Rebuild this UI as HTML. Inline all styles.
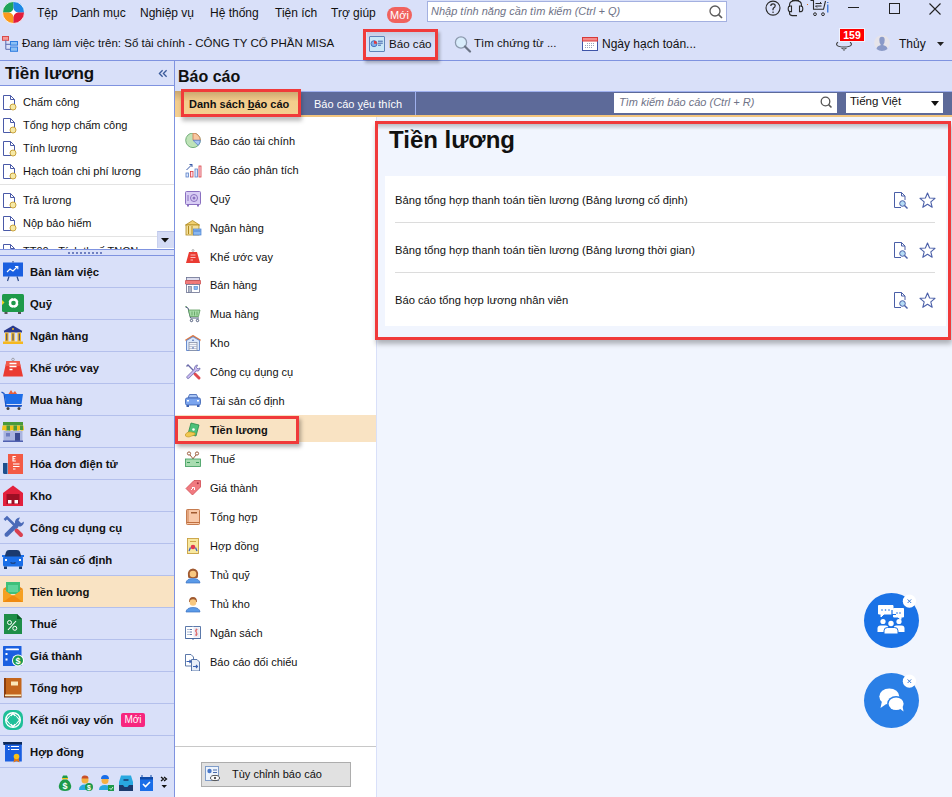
<!DOCTYPE html>
<html><head><meta charset="utf-8">
<style>
*{box-sizing:border-box;margin:0;padding:0}
html,body{width:952px;height:797px;overflow:hidden;background:#d9e0f9;font-family:"Liberation Sans",sans-serif;color:#111;position:relative}
.a{position:absolute;white-space:nowrap}
.t{position:absolute;white-space:nowrap;line-height:1}
</style></head><body>

<!-- ===== MENU BAR ===== -->
<div id="menubar">
  <svg class="a" style="left:1.6px;top:0.5px" width="23" height="23" viewBox="0 0 23 23">
    <path d="M11.5 11.5 L11.5 0.5 A11 11 0 0 0 0.5 11.5 Z" fill="#1fa35a"/>
    <path d="M11.5 11.5 L22.5 11.5 A11 11 0 0 0 11.5 0.5 Z" fill="#1e88e5"/>
    <path d="M11.5 11.5 L0.5 11.5 A11 11 0 0 0 11.5 22.5 Z" fill="#fb9a1c"/>
    <path d="M11.5 11.5 L11.5 22.5 A11 11 0 0 0 22.5 11.5 Z" fill="#e21d3c"/>
    <path d="M11.5 7 Q12.1 10.9 16 11.5 Q12.1 12.1 11.5 16 Q10.9 12.1 7 11.5 Q10.9 10.9 11.5 7Z" fill="#fff"/>
    <circle cx="11.5" cy="11.5" r="11" fill="none" stroke="#fff" stroke-width="0.8"/>
  </svg>
  <div class="t" style="left:37px;top:7px;font-size:12px">Tệp</div>
  <div class="t" style="left:71px;top:7px;font-size:12px">Danh mục</div>
  <div class="t" style="left:140px;top:7px;font-size:12px">Nghiệp vụ</div>
  <div class="t" style="left:210px;top:7px;font-size:12px">Hệ thống</div>
  <div class="t" style="left:275px;top:7px;font-size:12px">Tiện ích</div>
  <div class="t" style="left:331px;top:7px;font-size:12px">Trợ giúp</div>
  <div class="a" style="left:387px;top:7px;width:25px;height:16px;border-radius:8px;background:#f0625e;color:#fff;font-size:11px;line-height:16px;text-align:center">Mới</div>
  <div class="a" style="left:427px;top:1px;width:300px;height:21px;background:#fff;border:1px solid #a3b0e0"></div>
  <div class="t" style="left:431px;top:6px;font-size:11px;font-style:italic;color:#6f7387">Nhập tính năng cần tìm kiếm (Ctrl + Q)</div>
  <svg class="a" style="left:708px;top:4px" width="16" height="16" viewBox="0 0 16 16"><circle cx="7" cy="7" r="5" fill="none" stroke="#5a5a5a" stroke-width="1.3"/><path d="M10.6 10.6 L14 14" stroke="#5a5a5a" stroke-width="1.6"/></svg>
  <!-- right icons -->
  <svg class="a" style="left:764px;top:0px" width="18" height="17" viewBox="0 0 18 17"><circle cx="9" cy="8.1" r="7" fill="none" stroke="#2a2a2a" stroke-width="1.1"/><path d="M6.8 6 Q6.8 3.8 9 3.8 Q11.2 3.8 11.2 5.8 Q11.2 7.2 9.6 7.9 Q9 8.3 9 9.6 V10.2" fill="none" stroke="#2a2a2a" stroke-width="1.2"/><rect x="8.4" y="11.6" width="1.3" height="1.3" fill="#2a2a2a"/></svg>
  <svg class="a" style="left:787px;top:0px" width="18" height="17" viewBox="0 0 18 17"><path d="M2.5 7 V5 Q2.5 0.6 8.5 0.6 Q14.5 0.6 14.5 5 V7" fill="none" stroke="#2a2a2a" stroke-width="1.1"/><path d="M2.5 11 V13 Q2.5 15.6 5.5 15.6 H10" fill="none" stroke="#2a2a2a" stroke-width="1.1"/><path d="M4.5 6 H3 Q1.2 6 1.2 8.8 Q1.2 11.6 3 11.6 H4.5Z M12.5 6 H14 Q15.8 6 15.8 8.8 Q15.8 11.6 14 11.6 H12.5Z" fill="none" stroke="#2a2a2a" stroke-width="1.1"/><rect x="5" y="0" width="7" height="1" fill="#2a2a2a"/></svg>
  <div class="a" style="left:807px;top:4px;width:1px;height:1px;background:#d06a20"></div>
  <svg class="a" style="left:810px;top:0px" width="20" height="17" viewBox="0 0 20 17"><path d="M0.5 0.5 H3.5 V9.3 H13.5 L15.5 1" fill="none" stroke="#2a2a2a" stroke-width="1.1"/><path d="M5.5 3.5 H11.5 M10 2 L11.5 3.5 M5.5 6 H11.5 M7 7.5 L5.5 6" stroke="#2a2a2a" stroke-width="1" fill="none"/><circle cx="5" cy="14.2" r="1.4" fill="none" stroke="#2a2a2a" stroke-width="1"/><circle cx="13" cy="14.2" r="1.4" fill="none" stroke="#2a2a2a" stroke-width="1"/><path d="M17.8 2 V3 M17.8 4.5 V12.5" stroke="#1a5fd0" stroke-width="1.1"/></svg>
  <div class="a" style="left:848px;top:7px;width:11px;height:1px;background:#222"></div>
  <div class="a" style="left:889px;top:3px;width:11px;height:11px;border:1px solid #222"></div>
  <svg class="a" style="left:929px;top:3px" width="12" height="12" viewBox="0 0 12 12"><path d="M0.5 0.5 L11.5 11.5 M11.5 0.5 L0.5 11.5" stroke="#222" stroke-width="1.1"/></svg>
</div>

<!-- ===== TOOLBAR ===== -->
<div id="toolbar">
  <svg class="a" style="left:2px;top:36px" width="17" height="17" viewBox="0 0 17 17">
    <rect x="0.5" y="0.5" width="6" height="3.8" fill="#f59a9a" stroke="#d94b4b" stroke-width="1"/>
    <path d="M3.8 4.3 V13.3 H8.5 M3.8 8.3 H8.5" fill="none" stroke="#5a6ab0" stroke-width="1"/>
    <rect x="8.5" y="5.5" width="7" height="3.6" fill="#8cc0f4" stroke="#2f7de0" stroke-width="1"/>
    <rect x="8.5" y="11" width="7" height="4.3" fill="#8cc0f4" stroke="#2f7de0" stroke-width="1"/>
  </svg>
  <div class="t" style="left:22px;top:38px;font-size:11.5px">Đang làm việc trên: Sổ tài chính - CÔNG TY CỔ PHẦN MISA</div>
  <!-- Bao cao button w/ red box -->
  <div class="a" style="left:363px;top:29px;width:75px;height:31px;border:3px solid #f03a3a;z-index:5;box-shadow:2px 3px 3px rgba(0,0,0,0.25)"></div>
  <div class="a" style="left:367px;top:32px;width:68px;height:25px;background:linear-gradient(#c4cbe0,#d3d9f0 25%,#d9e0f9 60%)"></div>
  <svg class="a" style="left:369px;top:36px" width="16" height="16" viewBox="0 0 16 16"><rect x="0.5" y="0.5" width="15" height="15" rx="0.5" fill="#c9e7f7" stroke="#5f84b8" stroke-width="1"/><circle cx="5" cy="7.7" r="3" fill="#7fb0ea" stroke="#3f6cb8" stroke-width="0.9"/><path d="M5 7.7 V4.7 A3 3 0 0 1 8 7.7Z" fill="#e23a3a"/><path d="M9 5.2 H13.8 M9 7.2 H13.8 M9 9.2 H12" stroke="#3f5fa8" stroke-width="1"/></svg>
  <div class="t" style="left:389px;top:38px;font-size:11.6px">Báo cáo</div>
  <svg class="a" style="left:454px;top:36px" width="18" height="17" viewBox="0 0 18 17"><circle cx="7" cy="6.5" r="5.6" fill="#d8ecfb" stroke="#8c9aae" stroke-width="1.3"/><path d="M11 10.5 L16 15.5" stroke="#6b7486" stroke-width="2.2" stroke-linecap="round"/></svg>
  <div class="t" style="left:474px;top:38px;font-size:11.5px">Tìm chứng từ ...</div>
  <svg class="a" style="left:582px;top:37px" width="16" height="14" viewBox="0 0 16 14"><rect x="0.5" y="0.5" width="15" height="13" fill="#fff" stroke="#3f55a8" stroke-width="1"/><rect x="0.5" y="0.5" width="15" height="3.5" fill="#f58a8a" stroke="#d63a3a" stroke-width="1"/><g fill="#9aa4b8"><rect x="5" y="6" width="1" height="1"/><rect x="7" y="6" width="1" height="1"/><rect x="9" y="6" width="1" height="1"/><rect x="11" y="6" width="1" height="1"/><rect x="3" y="8" width="1" height="1"/><rect x="5" y="8" width="1" height="1"/><rect x="7" y="8" width="1" height="1"/><rect x="9" y="8" width="1" height="1"/><rect x="11" y="8" width="1" height="1"/><rect x="3" y="10" width="1" height="1"/><rect x="5" y="10" width="1" height="1"/><rect x="7" y="10" width="1" height="1"/><rect x="9" y="10" width="1" height="1"/></g></svg>
  <div class="t" style="left:602px;top:38px;font-size:12px">Ngày hạch toán...</div>
  <!-- notification -->
  <svg class="a" style="left:835px;top:40px" width="18" height="12" viewBox="0 0 18 12"><path d="M3 2.2 Q1.3 3.2 1.6 4.6 Q2.5 7 9 7 Q15.5 7 16.4 4.6 Q16.7 3.2 15 2.2" fill="none" stroke="#3a3a3a" stroke-width="1.1"/><path d="M6.5 8 Q9 10 11.5 8" fill="none" stroke="#555" stroke-width="1.1"/><path d="M8 9.8 L9 11 L10 9.8" fill="#444"/></svg>
  <div class="a" style="left:840px;top:29px;width:24px;height:12px;background:#f00;color:#fff;font-size:10.5px;font-weight:bold;line-height:12px;text-align:center;box-shadow:0 0 0 1px rgba(255,255,255,0.6)">159</div>
  <svg class="a" style="left:874px;top:35px" width="16" height="16" viewBox="0 0 16 16"><circle cx="8" cy="8" r="7.8" fill="#e6e4ea"/><path d="M8 1.8 Q5.3 1.8 5.3 5 Q5.3 8 6.6 9.3 V10.3 Q3 11 2.5 14 Q5 16 8 16 Q11 16 13.5 14 Q13 11 9.4 10.3 V9.3 Q10.7 8 10.7 5 Q10.7 1.8 8 1.8Z" fill="#8a9ac8"/></svg>
  <div class="t" style="left:899px;top:38px;font-size:12px">Thủy</div>
  <svg class="a" style="left:937px;top:42px" width="7" height="4" viewBox="0 0 7 4"><path d="M0 0 H7 L3.5 4Z" fill="#222"/></svg>
</div>
<div class="a" style="left:0;top:60px;width:952px;height:1px;background:#7f93e0"></div>

<!-- ===== LEFT SIDEBAR ===== -->
<div id="sidebar">
  <div class="t" style="left:5px;top:65px;font-size:17px;font-weight:bold">Tiền lương</div>
  <svg class="a" style="left:158px;top:69px" width="10" height="9" viewBox="0 0 10 9"><path d="M4.6 1.2 L1.4 4.5 L4.6 7.8 M8.6 1.2 L5.4 4.5 L8.6 7.8" fill="none" stroke="#3a5a9a" stroke-width="1.3"/></svg>
  <div class="a" style="left:0;top:85px;width:174px;height:1px;background:#7f93e0"></div>
  <div class="a" style="left:0;top:86px;width:174px;height:163px;background:#fff"></div>
<svg class="a" style="left:2px;top:95px" width="16" height="16" viewBox="0 0 16 16"><path d="M1.5 0.5 H8.5 L12.5 4.5 V10 M10 14.5 H1.5 V0.5 M8.5 0.5 V4.5 H12.5" fill="none" stroke="#4a5aa8" stroke-width="1"/><circle cx="11" cy="12" r="3" fill="#f6e9a6" stroke="#c9a23c" stroke-width="1"/></svg>
<div class="t" style="left:23px;top:97px;font-size:11px">Chấm công</div>
<svg class="a" style="left:2px;top:118px" width="16" height="16" viewBox="0 0 16 16"><path d="M1.5 0.5 H8.5 L12.5 4.5 V10 M10 14.5 H1.5 V0.5 M8.5 0.5 V4.5 H12.5" fill="none" stroke="#4a5aa8" stroke-width="1"/><circle cx="11" cy="12" r="3" fill="#f6e9a6" stroke="#c9a23c" stroke-width="1"/></svg>
<div class="t" style="left:23px;top:120px;font-size:11px">Tổng hợp chấm công</div>
<svg class="a" style="left:2px;top:141px" width="16" height="16" viewBox="0 0 16 16"><path d="M1.5 0.5 H8.5 L12.5 4.5 V10 M10 14.5 H1.5 V0.5 M8.5 0.5 V4.5 H12.5" fill="none" stroke="#4a5aa8" stroke-width="1"/><circle cx="11" cy="12" r="3" fill="#f6e9a6" stroke="#c9a23c" stroke-width="1"/></svg>
<div class="t" style="left:23px;top:143px;font-size:11px">Tính lương</div>
<svg class="a" style="left:2px;top:164px" width="16" height="16" viewBox="0 0 16 16"><path d="M1.5 0.5 H8.5 L12.5 4.5 V10 M10 14.5 H1.5 V0.5 M8.5 0.5 V4.5 H12.5" fill="none" stroke="#4a5aa8" stroke-width="1"/><circle cx="11" cy="12" r="3" fill="#f6e9a6" stroke="#c9a23c" stroke-width="1"/></svg>
<div class="t" style="left:23px;top:166px;font-size:11px">Hạch toán chi phí lương</div>
<svg class="a" style="left:2px;top:193px" width="16" height="16" viewBox="0 0 16 16"><path d="M1.5 0.5 H8.5 L12.5 4.5 V10 M10 14.5 H1.5 V0.5 M8.5 0.5 V4.5 H12.5" fill="none" stroke="#4a5aa8" stroke-width="1"/><circle cx="11" cy="12" r="3" fill="#f6e9a6" stroke="#c9a23c" stroke-width="1"/></svg>
<div class="t" style="left:23px;top:195px;font-size:11px">Trả lương</div>
<svg class="a" style="left:2px;top:216px" width="16" height="16" viewBox="0 0 16 16"><path d="M1.5 0.5 H8.5 L12.5 4.5 V10 M10 14.5 H1.5 V0.5 M8.5 0.5 V4.5 H12.5" fill="none" stroke="#4a5aa8" stroke-width="1"/><circle cx="11" cy="12" r="3" fill="#f6e9a6" stroke="#c9a23c" stroke-width="1"/></svg>
<div class="t" style="left:23px;top:218px;font-size:11px">Nộp bảo hiểm</div>
<svg class="a" style="left:2px;top:244px" width="16" height="16" viewBox="0 0 16 16"><path d="M1.5 0.5 H8.5 L12.5 4.5 V10 M10 14.5 H1.5 V0.5 M8.5 0.5 V4.5 H12.5" fill="none" stroke="#4a5aa8" stroke-width="1"/><circle cx="11" cy="12" r="3" fill="#f6e9a6" stroke="#c9a23c" stroke-width="1"/></svg>
<div class="t" style="left:23px;top:246px;font-size:11px">TT00 - Tính thuế TNCN</div>
<div class="a" style="left:0;top:184px;width:174px;height:1px;background:#e3e3e3"></div>
<div class="a" style="left:0;top:236px;width:174px;height:1px;background:#e3e3e3"></div>
<div class="a" style="left:0;top:249px;width:174px;height:6px;background:#d9e0f9"></div>
<div class="a" style="left:157px;top:231px;width:17px;height:17px;background:#d4dbf5;border-top:1px solid #b9c3e8;border-left:1px solid #c9d1ef"></div>
<svg class="a" style="left:161px;top:238px" width="8" height="5" viewBox="0 0 8 5"><path d="M0 0 H8 L4 4.5Z" fill="#111"/></svg>
<div class="a" style="left:68px;top:252px;width:34px;height:2px;background:repeating-linear-gradient(90deg,#7080c0 0 2px,transparent 2px 4px)"></div>
<div class="a" style="left:0;top:249px;width:174px;height:1px;background:#7f93e0"></div>
  <div class="a" style="left:0;top:255px;width:174px;height:1px;background:#7f93e0"></div>
<div class="a" style="left:0;top:256px;width:174px;height:31px;background:#d9e0f9"></div>
<div class="a" style="left:0;top:287px;width:174px;height:1px;background:#b4c0ec"></div>
<svg class="a" style="left:0;top:256px" width="26" height="32" viewBox="0 0 26 32"><rect x="3" y="6.5" width="20" height="14" fill="#1a5fe0"/><path d="M13 5 V6.5" stroke="#2b3f7a" stroke-width="1"/><path d="M9 20.5 L7.5 25 M17 20.5 L18.5 25" stroke="#2b4a8a" stroke-width="1.2"/><path d="M7 16 L10 13 L13 15 L17 11 M15 10.5 H17.8 V13.3" fill="none" stroke="#fff" stroke-width="1.1"/></svg>
<div class="t" style="left:30px;top:267px;font-size:11.3px;font-weight:bold">Bàn làm việc</div>
<div class="a" style="left:0;top:288px;width:174px;height:31px;background:#d9e0f9"></div>
<div class="a" style="left:0;top:319px;width:174px;height:1px;background:#b4c0ec"></div>
<svg class="a" style="left:0;top:288px" width="26" height="32" viewBox="0 0 26 32"><rect x="2" y="6" width="22" height="18" rx="1.5" fill="#1e9a4a"/><rect x="4.5" y="24" width="3" height="2" fill="#555"/><rect x="18" y="24" width="3" height="2" fill="#555"/><path d="M2 12 L4.5 14.5 L2 17Z" fill="#f2d21e"/><circle cx="13.5" cy="15" r="5" fill="#fff"/><circle cx="13.5" cy="15" r="2.3" fill="#1e9a4a"/><path d="M13.5 9 V10.5 M13.5 19.5 V21 M7.5 15 H9 M18 15 H19.5" stroke="#1e9a4a" stroke-width="1.4"/></svg>
<div class="t" style="left:30px;top:299px;font-size:11.3px;font-weight:bold">Quỹ</div>
<div class="a" style="left:0;top:320px;width:174px;height:31px;background:#d9e0f9"></div>
<div class="a" style="left:0;top:351px;width:174px;height:1px;background:#b4c0ec"></div>
<svg class="a" style="left:0;top:320px" width="26" height="32" viewBox="0 0 26 32"><path d="M3.5 11 L13 5.5 L22.5 11Z" fill="#2a3a8e"/><rect x="4" y="11" width="18" height="1.5" fill="#2a3a8e"/><circle cx="13" cy="9" r="1" fill="#f5b820"/><rect x="5" y="12.5" width="3.5" height="9" fill="#f5b820"/><rect x="11.2" y="12.5" width="3.5" height="9" fill="#f5b820"/><rect x="17.5" y="12.5" width="3.5" height="9" fill="#f5b820"/><rect x="6.3" y="13.5" width="1" height="7" fill="#2a3a8e"/><rect x="12.5" y="13.5" width="1" height="7" fill="#2a3a8e"/><rect x="18.8" y="13.5" width="1" height="7" fill="#2a3a8e"/><rect x="3" y="21.5" width="20" height="2.5" fill="#f5b820"/></svg>
<div class="t" style="left:30px;top:331px;font-size:11.3px;font-weight:bold">Ngân hàng</div>
<div class="a" style="left:0;top:352px;width:174px;height:31px;background:#d9e0f9"></div>
<div class="a" style="left:0;top:383px;width:174px;height:1px;background:#b4c0ec"></div>
<svg class="a" style="left:0;top:352px" width="26" height="32" viewBox="0 0 26 32"><circle cx="13" cy="7.5" r="1.3" fill="none" stroke="#888" stroke-width="0.7"/><path d="M6.5 9 H19.5 L23 24.5 H3Z" fill="#ea3b32"/><path d="M6.5 9 H19.5 L20.5 14 H5.5Z" fill="#f25a4a"/><path d="M9.5 11.5 H16.5 M9.5 14.5 H16.5 M9.5 17.5 H12.5" stroke="#fff" stroke-width="1.3"/></svg>
<div class="t" style="left:30px;top:363px;font-size:11.3px;font-weight:bold">Khế ước vay</div>
<div class="a" style="left:0;top:384px;width:174px;height:31px;background:#d9e0f9"></div>
<div class="a" style="left:0;top:415px;width:174px;height:1px;background:#b4c0ec"></div>
<svg class="a" style="left:0;top:384px" width="26" height="32" viewBox="0 0 26 32"><path d="M1.5 8 L4 9.5 L6 22 H21" fill="none" stroke="#1a55c8" stroke-width="1.3"/><path d="M8.5 10 L11 6 L13 9 L15 7 L17 10Z" fill="#e8603a"/><path d="M4.5 10 H23 L21.5 20 H6Z" fill="#1e6ee8"/><rect x="5" y="21" width="17" height="1.5" fill="#1a55c8"/><circle cx="8" cy="24.5" r="1.5" fill="#444"/><circle cx="19" cy="24.5" r="1.5" fill="#444"/></svg>
<div class="t" style="left:30px;top:395px;font-size:11.3px;font-weight:bold">Mua hàng</div>
<div class="a" style="left:0;top:416px;width:174px;height:31px;background:#d9e0f9"></div>
<div class="a" style="left:0;top:447px;width:174px;height:1px;background:#b4c0ec"></div>
<svg class="a" style="left:0;top:416px" width="26" height="32" viewBox="0 0 26 32"><rect x="3.5" y="15" width="19" height="11" fill="#a9b4e0"/><rect x="6" y="17" width="4" height="3.5" fill="#6c7cc0"/><rect x="15" y="17" width="5" height="9" fill="#3a4a90"/><rect x="3" y="24.5" width="20" height="1.5" fill="#5060b0"/><rect x="3" y="6" width="20" height="3.5" fill="#4a9a3a"/><path d="M2.5 9.5 H23.5 L24 14 Q22 15.5 20 14 Q18 15.5 16 14 Q14 15.5 12 14 Q10 15.5 8 14 Q6 15.5 4 14 Q3 14.5 2 14Z" fill="#f2c21a"/><path d="M6.5 9.5 H10 V14.5 H6.5Z M13.5 9.5 H17 V14.5 H13.5Z M20 9.5 H23 V14 H20Z" fill="#4a9a3a"/></svg>
<div class="t" style="left:30px;top:427px;font-size:11.3px;font-weight:bold">Bán hàng</div>
<div class="a" style="left:0;top:448px;width:174px;height:31px;background:#d9e0f9"></div>
<div class="a" style="left:0;top:479px;width:174px;height:1px;background:#b4c0ec"></div>
<svg class="a" style="left:0;top:448px" width="26" height="32" viewBox="0 0 26 32"><rect x="8" y="6" width="15" height="20" fill="#f35a45"/><path d="M3 15 H7.5 V26 H4.5 Q3 26 3 24.5Z" fill="#1d4f8e"/><path d="M15.8 8.5 H13 V13 H15.8 M13 10.75 H15.3 M13 16 H19.5 M13 18.5 H19.5 M13 21 H15.5" stroke="#fff" stroke-width="1.1" fill="none"/></svg>
<div class="t" style="left:30px;top:459px;font-size:11.3px;font-weight:bold">Hóa đơn điện tử</div>
<div class="a" style="left:0;top:480px;width:174px;height:31px;background:#d9e0f9"></div>
<div class="a" style="left:0;top:511px;width:174px;height:1px;background:#b4c0ec"></div>
<svg class="a" style="left:0;top:480px" width="26" height="32" viewBox="0 0 26 32"><path d="M3 13 L13 5.5 L23 13 V26 H3Z" fill="#e3203c"/><rect x="6.5" y="14" width="13" height="12" fill="#9d0f24"/><rect x="8" y="20" width="3.5" height="3.5" fill="#fff"/><rect x="14.5" y="20" width="3.5" height="3.5" fill="#fff"/><rect x="5" y="24" width="16" height="2" fill="#e3203c"/></svg>
<div class="t" style="left:30px;top:491px;font-size:11.3px;font-weight:bold">Kho</div>
<div class="a" style="left:0;top:512px;width:174px;height:31px;background:#d9e0f9"></div>
<div class="a" style="left:0;top:543px;width:174px;height:1px;background:#b4c0ec"></div>
<svg class="a" style="left:0;top:512px" width="26" height="32" viewBox="0 0 26 32"><path d="M4.5 8 L7 5.5 L17.5 16" stroke="#4a6ab8" stroke-width="2.6" fill="none"/><path d="M16.5 18.5 L21 23" stroke="#d9404f" stroke-width="4" stroke-linecap="round"/><path d="M20 5.5 A5 5 0 0 0 15 11.5 L4.8 21.5 A2.2 2.2 0 0 0 7.8 24.5 L18 14.5 A5 5 0 0 0 24 9.5 L21.2 11.2 L18.5 8.6 Z" fill="#4a6ab8"/></svg>
<div class="t" style="left:30px;top:523px;font-size:11.3px;font-weight:bold">Công cụ dụng cụ</div>
<div class="a" style="left:0;top:544px;width:174px;height:31px;background:#d9e0f9"></div>
<div class="a" style="left:0;top:575px;width:174px;height:1px;background:#b4c0ec"></div>
<svg class="a" style="left:0;top:544px" width="26" height="32" viewBox="0 0 26 32"><path d="M6 8 Q6.5 6 9 6 H17 Q19.5 6 20 8 L21.5 13 H4.5Z" fill="#1b3a6e"/><rect x="2" y="11" width="3" height="2" fill="#1a6ee8"/><rect x="21" y="11" width="3" height="2" fill="#1a6ee8"/><rect x="3" y="12.5" width="20" height="10" rx="1.5" fill="#1a6ee8"/><rect x="5" y="15" width="2" height="2" fill="#fff"/><rect x="19" y="15" width="2" height="2" fill="#fff"/><path d="M10.5 18.5 Q13 20 15.5 18.5" stroke="#1b3a6e" stroke-width="1.1" fill="none"/><rect x="4" y="22.5" width="3" height="2.5" fill="#1b3a6e"/><rect x="19" y="22.5" width="3" height="2.5" fill="#1b3a6e"/></svg>
<div class="t" style="left:30px;top:555px;font-size:11.3px;font-weight:bold">Tài sản cố định</div>
<div class="a" style="left:0;top:576px;width:174px;height:31px;background:#f9e3c3"></div>
<div class="a" style="left:0;top:607px;width:174px;height:1px;background:#b4c0ec"></div>
<svg class="a" style="left:0;top:576px" width="26" height="32" viewBox="0 0 26 32"><rect x="6" y="6" width="14" height="12" fill="#3ec07a"/><rect x="8" y="9" width="10" height="7" fill="#5ed39a"/><path d="M3 13 L13 20 L23 13 V26 H3Z" fill="#f5a020"/><path d="M3 26 L13 19 L23 26Z" fill="#f08a10"/><path d="M3 13 L6 11 V15Z M23 13 L20 11 V15Z" fill="#e88a18"/></svg>
<div class="t" style="left:30px;top:587px;font-size:11.3px;font-weight:bold">Tiền lương</div>
<div class="a" style="left:0;top:608px;width:174px;height:31px;background:#d9e0f9"></div>
<div class="a" style="left:0;top:639px;width:174px;height:1px;background:#b4c0ec"></div>
<svg class="a" style="left:0;top:608px" width="26" height="32" viewBox="0 0 26 32"><path d="M4 6 H17 L22 11 V26 H4Z" fill="#1e8e48"/><path d="M17 6 L22 11 H17Z" fill="#0b5a28"/><path d="M8 22 L16 13" stroke="#fff" stroke-width="1.1"/><circle cx="9.5" cy="14.5" r="2" fill="none" stroke="#fff" stroke-width="1"/><circle cx="14.8" cy="20.3" r="2" fill="none" stroke="#fff" stroke-width="1"/></svg>
<div class="t" style="left:30px;top:619px;font-size:11.3px;font-weight:bold">Thuế</div>
<div class="a" style="left:0;top:640px;width:174px;height:31px;background:#d9e0f9"></div>
<div class="a" style="left:0;top:671px;width:174px;height:1px;background:#b4c0ec"></div>
<svg class="a" style="left:0;top:640px" width="26" height="32" viewBox="0 0 26 32"><rect x="3" y="6" width="18.5" height="20" rx="0.5" fill="#1a5fe0"/><rect x="5.5" y="8.5" width="13.5" height="1.8" rx="0.9" fill="#fff"/><rect x="5.5" y="13" width="2" height="2" fill="#fff"/><rect x="5.5" y="18.5" width="2" height="2" fill="#fff"/><circle cx="18" cy="20.5" r="6" fill="#fff"/><circle cx="18" cy="20.5" r="5" fill="#1e9a4a"/><text x="18" y="24" font-size="9" font-weight="bold" text-anchor="middle" fill="#fff" font-family="Liberation Sans">$</text></svg>
<div class="t" style="left:30px;top:651px;font-size:11.3px;font-weight:bold">Giá thành</div>
<div class="a" style="left:0;top:672px;width:174px;height:31px;background:#d9e0f9"></div>
<div class="a" style="left:0;top:703px;width:174px;height:1px;background:#b4c0ec"></div>
<svg class="a" style="left:0;top:672px" width="26" height="32" viewBox="0 0 26 32"><rect x="4" y="6" width="17.5" height="19" rx="0.8" fill="#c4661c"/><rect x="4" y="6" width="2" height="19" fill="#8a3e10"/><rect x="11" y="9.5" width="7" height="4" fill="#fbe8b8"/><rect x="5" y="22.5" width="16" height="2" fill="#fbe8b8"/><path d="M4 25 H21.5" stroke="#6a2a08" stroke-width="1"/></svg>
<div class="t" style="left:30px;top:683px;font-size:11.3px;font-weight:bold">Tổng hợp</div>
<div class="a" style="left:0;top:704px;width:174px;height:31px;background:#d9e0f9"></div>
<div class="a" style="left:0;top:735px;width:174px;height:1px;background:#b4c0ec"></div>
<svg class="a" style="left:0;top:704px" width="26" height="32" viewBox="0 0 26 32"><rect x="3" y="6" width="20" height="20" rx="7" fill="#1fbf98"/><path d="M13 9.5 L19.5 16 L13 22.5 L6.5 16Z" fill="none" stroke="#fff" stroke-width="1.6"/><circle cx="13" cy="16" r="7.3" fill="none" stroke="#fff" stroke-width="1.4"/><path d="M11 12 L8 16 L11 20 M15 12 L18 16 L15 20" fill="none" stroke="#1fbf98" stroke-width="1.2"/></svg>
<div class="t" style="left:30px;top:715px;font-size:11.3px;font-weight:bold">Kết nối vay vốn</div>
<div class="a" style="left:121px;top:713px;width:24px;height:14px;border-radius:2px;background:#f7267e;color:#fff;font-size:10px;line-height:14px;text-align:center">Mới</div>
<div class="a" style="left:0;top:736px;width:174px;height:31px;background:#d9e0f9"></div>
<div class="a" style="left:0;top:767px;width:174px;height:1px;background:#b4c0ec"></div>
<svg class="a" style="left:0;top:736px" width="26" height="32" viewBox="0 0 26 32"><path d="M3 6 H22 V9 H3.5Z" fill="#0e2a5a"/><rect x="5" y="7" width="16.8" height="18.5" fill="#1a5fe0"/><path d="M3 6 H22 V8.5 H5 Z" fill="#0e2a5a"/><path d="M8 10.5 H9.5 M11 10.5 H19 M8 13.5 H9.5 M11 13.5 H19" stroke="#fff" stroke-width="1.2"/><path d="M14.5 21 L13.5 26.5 L16.5 25 L19.5 26.5 L18.5 21Z" fill="#e07818"/><circle cx="16.5" cy="20.5" r="2.8" fill="#f8c018"/></svg>
<div class="t" style="left:30px;top:747px;font-size:11.3px;font-weight:bold">Hợp đồng</div>
<svg class="a" style="left:56px;top:774px" width="116" height="18" viewBox="0 0 116 18">
<path d="M6 4 Q9 6 12 4 L11 1.5 H7Z" fill="#1e9a4a"/><rect x="6" y="4" width="6" height="1.3" fill="#f2c21a"/><path d="M7 5.5 Q2 9 3 14 Q4 17 9 17 Q14 17 15 14 Q16 9 11 5.5Z" fill="#1e9a4a"/><text x="9" y="15" font-size="9" font-weight="bold" fill="#fff" text-anchor="middle" font-family="Liberation Sans">$</text>
<circle cx="29" cy="6" r="3.5" fill="#f5b040"/><path d="M25.5 4.5 Q26 1 29 1.5 Q32.5 1.5 32.5 4.5Z" fill="#c8502a"/><path d="M23 16 Q23 10.5 29 10.5 Q33 10.5 34.5 13 V16Z" fill="#29a8e0"/><circle cx="33" cy="13" r="4" fill="#1e9a4a"/><text x="33" y="16" font-size="7" font-weight="bold" fill="#fff" text-anchor="middle" font-family="Liberation Sans">$</text>
<circle cx="49" cy="6.5" r="3.5" fill="#f5b040"/><path d="M45 5 Q45 1 49 1 Q53 1 53 5Z" fill="#1a6ee8"/><path d="M43 16 Q43 11 49 11 Q53 11 54 13 V16Z" fill="#29a8e0"/><rect x="52" y="11" width="6" height="6" fill="#1e9a4a"/><path d="M53.5 14 L55 15.5 L57 13" stroke="#fff" stroke-width="0.8" fill="none"/>
<path d="M65 1.5 H75 L77 8 V16.5 H63 V8Z" fill="#29a8e0"/><path d="M63 11 H77 V17 H63Z" fill="#1b3a6e"/><path d="M67.5 6 H72.5" stroke="#1b3a6e" stroke-width="1.5"/><path d="M67 11 L68.5 13 H71.5 L73 11" fill="#29a8e0"/>
<rect x="84" y="3" width="13" height="14" fill="#1a6ee8"/><rect x="84" y="3" width="13" height="2.5" fill="#0e4aa8"/><path d="M86 1 V4 M95 1 V4" stroke="#0e4aa8" stroke-width="1"/><path d="M87 10 L89.5 12.5 L94 8" stroke="#fff" stroke-width="1.6" fill="none"/>
<path d="M105 3 L107.5 5 L105 7 M108 3 L110.5 5 L108 7" stroke="#111" stroke-width="1.3" fill="none"/><path d="M105.5 11 H111 L108.2 14Z" fill="#111"/>
</svg>
<div class="a" style="left:174px;top:60px;width:1px;height:737px;background:#7f93e0"></div>
</div>

<!-- ===== MIDDLE ===== -->
<div id="middle">
  <div class="t" style="left:178px;top:69px;font-size:16px;font-weight:bold">Báo cáo</div>
  <div class="a" style="left:175px;top:91px;width:777px;height:1px;background:#9fb0ee"></div>
  <div class="a" style="left:175px;top:92px;width:777px;height:23px;background:#5d6a99"></div>
  <div class="a" style="left:175px;top:115px;width:777px;height:2px;background:#f3c57e"></div>
  <div class="a" style="left:175px;top:91px;width:126px;height:26px;background:linear-gradient(#c9a66e,#f3cc8c 40%,#f4cf90)"></div>
  <div class="a" style="left:181px;top:89px;width:120px;height:28px;border:3px solid #f03a3a;z-index:5;box-shadow:1px 4px 4px rgba(0,0,0,0.25)"></div>
  <div class="t" style="left:189px;top:99px;font-size:11px;font-weight:bold">Danh sách <u>b</u>áo cáo</div>
  <div class="t" style="left:314px;top:99px;font-size:11px;color:#fff">Báo cáo <u>y</u>êu thích</div>
  <div class="a" style="left:415px;top:92px;width:1px;height:23px;background:#9fb0ee"></div>
  <div class="a" style="left:614px;top:93px;width:223px;height:20px;background:#fff"></div>
  <div class="t" style="left:619px;top:97px;font-size:11px;font-style:italic;color:#6f7387">Tìm kiếm báo cáo (Ctrl + R)</div>
  <svg class="a" style="left:820px;top:96px" width="13" height="13" viewBox="0 0 13 13"><circle cx="5.5" cy="5.5" r="4.3" fill="none" stroke="#555" stroke-width="1.3"/><path d="M8.6 8.6 L11.5 11.5" stroke="#555" stroke-width="1.5"/></svg>
  <div class="a" style="left:846px;top:93px;width:97px;height:20px;background:#fff"></div>
  <div class="t" style="left:850px;top:96px;font-size:11.5px">Tiếng Việt</div>
  <svg class="a" style="left:931px;top:101px" width="8" height="5" viewBox="0 0 8 5"><path d="M0 0 H8 L4 5Z" fill="#111"/></svg>

  <div class="a" style="left:175px;top:117px;width:201px;height:680px;background:#fff"></div>
<div class="a" style="left:175px;top:415px;width:201px;height:27px;background:#f9e3c3"></div>
<svg class="a" style="left:185px;top:133px" width="17" height="17" viewBox="0 0 17 17"><circle cx="8" cy="7.3" r="7.3" fill="#bfe3b8" stroke="#6aa872" stroke-width="0.9"/><path d="M8 7.3 V0 A7.3 7.3 0 0 1 15.3 7.3Z" fill="#f8c7a0" stroke="#d07a50" stroke-width="0.8"/><path d="M8 7.3 H15.3 A7.3 7.3 0 0 1 13.2 12.4Z" fill="#a8c4f4" stroke="#5a80c8" stroke-width="0.8"/></svg>
<div class="t" style="left:210px;top:136px;font-size:11px;font-weight:normal">Báo cáo tài chính</div>
<svg class="a" style="left:185px;top:162px" width="17" height="17" viewBox="0 0 17 17"><path d="M1.5 8 L7 2.5 M4.5 2.5 H7 V5" stroke="#3a5aa8" stroke-width="1" fill="none"/><rect x="1" y="11" width="2.5" height="4" fill="#dfe8fb" stroke="#5a80c8" stroke-width="0.8"/><rect x="5.5" y="9.5" width="2.5" height="5.5" fill="#fde" stroke="#d84040" stroke-width="0.8"/><rect x="10" y="7" width="2.5" height="8" fill="#dfe8fb" stroke="#5a80c8" stroke-width="0.8"/><rect x="14" y="4" width="2" height="11" fill="#fde" stroke="#d84040" stroke-width="0.8"/></svg>
<div class="t" style="left:210px;top:165px;font-size:11px;font-weight:normal">Báo cáo phân tích</div>
<svg class="a" style="left:185px;top:191px" width="17" height="17" viewBox="0 0 17 17"><rect x="0.5" y="0.5" width="15" height="13" rx="1" fill="#d8cdf4" stroke="#8a70c0" stroke-width="1"/><circle cx="9" cy="7" r="3.5" fill="none" stroke="#8a70c0" stroke-width="1"/><circle cx="9" cy="7" r="1.5" fill="#8a70c0"/><path d="M3 4 V10" stroke="#8a70c0"/><rect x="2" y="14" width="2" height="1.5" fill="#8a70c0"/><rect x="12" y="14" width="2" height="1.5" fill="#8a70c0"/></svg>
<div class="t" style="left:210px;top:194px;font-size:11px;font-weight:normal">Quỹ</div>
<svg class="a" style="left:185px;top:220px" width="17" height="17" viewBox="0 0 17 17"><path d="M0.5 5 L7.5 0.5 L14.5 5Z" fill="#f0d070" stroke="#b08a20" stroke-width="0.8"/><rect x="1" y="5" width="13" height="10" fill="#f5e09a" stroke="#b08a20" stroke-width="0.8"/><path d="M3.5 6 V14 M7 6 V14" stroke="#b08a20" stroke-width="1"/><rect x="8.5" y="9" width="7.5" height="6" fill="#8ab8f0" stroke="#4a80d0" stroke-width="0.7"/><path d="M9 11 H15.5" stroke="#4a80d0"/></svg>
<div class="t" style="left:210px;top:223px;font-size:11px;font-weight:normal">Ngân hàng</div>
<svg class="a" style="left:185px;top:249px" width="17" height="17" viewBox="0 0 17 17"><circle cx="8" cy="1.5" r="1" fill="none" stroke="#888" stroke-width="0.6"/><path d="M4 3 H12 L15 14 H1Z" fill="#ea3b32"/><path d="M5.5 6 H10.5 M5.5 8.5 H10.5 M5.5 11 H8" stroke="#fbb" stroke-width="1"/></svg>
<div class="t" style="left:210px;top:252px;font-size:11px;font-weight:normal">Khế ước vay</div>
<svg class="a" style="left:185px;top:277px" width="17" height="17" viewBox="0 0 17 17"><rect x="1.5" y="0.5" width="13" height="3" fill="#dde" stroke="#6a7090" stroke-width="0.8"/><path d="M0.5 3.5 H15.5 V7 Q13.5 8.5 12 7 Q10 8.5 8 7 Q6 8.5 4 7 Q2 8.5 0.5 7Z" fill="#f07a7a" stroke="#c84848" stroke-width="0.7"/><rect x="1.5" y="7.5" width="13" height="8" fill="#fff" stroke="#6a7090" stroke-width="0.8"/><rect x="3.5" y="9.5" width="3" height="6" fill="#b0b8c8" stroke="#6a7090" stroke-width="0.6"/><rect x="9" y="9.5" width="3.5" height="3" fill="#8ab8f0" stroke="#4a80d0" stroke-width="0.6"/></svg>
<div class="t" style="left:210px;top:280px;font-size:11px;font-weight:normal">Bán hàng</div>
<svg class="a" style="left:185px;top:306px" width="17" height="17" viewBox="0 0 17 17"><path d="M0.5 1 L3 2 L5.5 12 H14" fill="none" stroke="#4a5878" stroke-width="1"/><path d="M3.5 4 H15 L13.5 10.5 H5Z" fill="#a8dca8" stroke="#5a9a5a" stroke-width="0.8"/><path d="M7 5.5 V9.5 M9.5 5.5 V9.5 M12 5.5 V9.5" stroke="#5a9a5a" stroke-width="0.8"/><circle cx="6.5" cy="14.5" r="1.2" fill="none" stroke="#4a5878"/><circle cx="12.5" cy="14.5" r="1.2" fill="none" stroke="#4a5878"/><path d="M0.5 0.5 L2 0" stroke="#5a9a5a"/></svg>
<div class="t" style="left:210px;top:309px;font-size:11px;font-weight:normal">Mua hàng</div>
<svg class="a" style="left:185px;top:335px" width="17" height="17" viewBox="0 0 17 17"><path d="M0.5 5.5 L8 0.8 L15.5 5.5" fill="none" stroke="#e07a40" stroke-width="1.6"/><path d="M1.5 5.5 L8 1.8 L14.5 5.5 V15.5 H1.5Z" fill="#dbe8fb" stroke="#5a80c8" stroke-width="0.9"/><rect x="4" y="7.5" width="8" height="8" fill="#f4f6fa" stroke="#7a8298" stroke-width="0.7"/><path d="M4 9.5 H12 M4 11.5 H12 M4 13.5 H12" stroke="#9aa2b8" stroke-width="0.6"/><rect x="7" y="12.5" width="2" height="0.8" fill="#3a5aa8"/><circle cx="8" cy="5.2" r="0.8" fill="#3a5aa8"/></svg>
<div class="t" style="left:210px;top:338px;font-size:11px;font-weight:normal">Kho</div>
<svg class="a" style="left:185px;top:364px" width="17" height="17" viewBox="0 0 17 17"><path d="M1.5 2.5 L3 1 L10 8" stroke="#6a6aa8" stroke-width="1.4" fill="none"/><path d="M10 10 L14 14" stroke="#e04a50" stroke-width="3" stroke-linecap="round"/><path d="M12.5 1 A3.3 3.3 0 0 0 9.5 5 L2 12.5 A1.3 1.3 0 0 0 3.8 14.3 L11.2 7 A3.3 3.3 0 0 0 15 4 L13 5 L11.5 3.5Z" fill="#c8b8f0" stroke="#6a6aa8" stroke-width="0.8"/></svg>
<div class="t" style="left:210px;top:367px;font-size:11px;font-weight:normal">Công cụ dụng cụ</div>
<svg class="a" style="left:185px;top:393px" width="17" height="17" viewBox="0 0 17 17"><path d="M3 5 L4.5 1.5 H11.5 L13 5Z" fill="#a8c4f4" stroke="#3a60b0" stroke-width="0.8"/><rect x="0.5" y="5" width="15" height="7" rx="1.5" fill="#7aa4ee" stroke="#3a60b0" stroke-width="0.8"/><rect x="2" y="7" width="2" height="1.5" fill="#fff"/><rect x="12" y="7" width="2" height="1.5" fill="#fff"/><rect x="1.5" y="12" width="2.5" height="2" fill="#3a60b0"/><rect x="12" y="12" width="2.5" height="2" fill="#3a60b0"/></svg>
<div class="t" style="left:210px;top:396px;font-size:11px;font-weight:normal">Tài sản cố định</div>
<svg class="a" style="left:185px;top:422px" width="17" height="17" viewBox="0 0 17 17"><path d="M6 1 L14 3 L11 14 L3 12Z" fill="#4ec07a" stroke="#2a8a4a" stroke-width="0.8"/><circle cx="8.5" cy="7.5" r="1.3" fill="#fff"/><path d="M0.5 12 Q3 9 6 10 L10 11 Q11 13 8 13.5 L4 15 Q1.5 15 0.5 14Z" fill="#f0c850" stroke="#c09020" stroke-width="0.6"/></svg>
<div class="t" style="left:210px;top:425px;font-size:11px;font-weight:bold">Tiền lương</div>
<svg class="a" style="left:185px;top:451px" width="17" height="17" viewBox="0 0 17 17"><circle cx="4" cy="2.5" r="1.6" fill="none" stroke="#9a5a3a" stroke-width="1"/><circle cx="12" cy="2.5" r="1.6" fill="none" stroke="#9a5a3a" stroke-width="1"/><path d="M5 4 L11.5 12 M11 4 L4.5 12" stroke="#9a5a3a" stroke-width="1"/><rect x="0.5" y="8" width="15" height="7.5" fill="#a8dcb0" stroke="#3a9a5a" stroke-width="0.8"/><path d="M2 11.5 H5 M11 11.5 H14" stroke="#3a9a5a"/></svg>
<div class="t" style="left:210px;top:454px;font-size:11px;font-weight:normal">Thuế</div>
<svg class="a" style="left:185px;top:480px" width="17" height="17" viewBox="0 0 17 17"><path d="M9 0.5 H15.5 V7 L7.5 15 L1 8.5Z" fill="#f07a80" stroke="#d04a50" stroke-width="0.8"/><circle cx="12.8" cy="3.2" r="1" fill="#a03040"/><path d="M6 10 L9 7 M7 7.5 H9.5 V10" stroke="#fff" stroke-width="1" fill="none"/></svg>
<div class="t" style="left:210px;top:483px;font-size:11px;font-weight:normal">Giá thành</div>
<svg class="a" style="left:185px;top:509px" width="17" height="17" viewBox="0 0 17 17"><rect x="1.5" y="0.5" width="13" height="15" rx="0.8" fill="#f8c8a8" stroke="#c07040" stroke-width="0.9"/><path d="M3 0.5 V13" stroke="#c07040" stroke-width="0.8"/><rect x="6" y="3" width="6" height="1.5" fill="#a05a30"/><path d="M2 13.5 H14.5" stroke="#c07040" stroke-width="1"/></svg>
<div class="t" style="left:210px;top:512px;font-size:11px;font-weight:normal">Tổng hợp</div>
<svg class="a" style="left:185px;top:538px" width="17" height="17" viewBox="0 0 17 17"><rect x="2.5" y="0.5" width="11" height="15" fill="#f8e8a0" stroke="#c8a040" stroke-width="0.9"/><path d="M5 3.5 H11" stroke="#c8a040" stroke-width="0.9"/><path d="M5.5 9.5 L4 13 M10.5 9.5 L12 13" stroke="#3a60c0" stroke-width="1.3"/><circle cx="8" cy="9" r="2.3" fill="#e03a50"/></svg>
<div class="t" style="left:210px;top:541px;font-size:11px;font-weight:normal">Hợp đồng</div>
<svg class="a" style="left:185px;top:567px" width="17" height="17" viewBox="0 0 17 17"><path d="M3 9 Q2 2 8 1.5 Q14 2 13 9 Q13 11 12 11 H4 Q3 11 3 9Z" fill="#a05a30"/><circle cx="8" cy="7" r="3.3" fill="#f8c880"/><path d="M1 16 Q1.5 11.5 8 11.5 Q14.5 11.5 15 16Z" fill="#5a9ae8" stroke="#3a70c0" stroke-width="0.7"/></svg>
<div class="t" style="left:210px;top:570px;font-size:11px;font-weight:normal">Thủ quỹ</div>
<svg class="a" style="left:185px;top:596px" width="17" height="17" viewBox="0 0 17 17"><path d="M4 6 Q4 1 8 1 Q12 1 12 6Z" fill="#a05a30"/><circle cx="8" cy="6.5" r="3.3" fill="#f8c880"/><path d="M1 16 Q1.5 11.5 8 11.5 Q14.5 11.5 15 16Z" fill="#5a9ae8" stroke="#3a70c0" stroke-width="0.7"/></svg>
<div class="t" style="left:210px;top:599px;font-size:11px;font-weight:normal">Thủ kho</div>
<svg class="a" style="left:185px;top:625px" width="17" height="17" viewBox="0 0 17 17"><path d="M0.5 1.5 H7.5 L8 2 L8.5 1.5 H15.5 V13.5 H0.5Z" fill="#fff" stroke="#4a6aa0" stroke-width="0.9"/><rect x="8.5" y="2.5" width="6" height="10" fill="#e8eaf4"/><path d="M2.5 4.5 H3.5 M4.5 4.5 H7 M2.5 7 H3.5 M4.5 7 H7 M2.5 9.5 H3.5 M4.5 9.5 H7" stroke="#4a6aa0" stroke-width="0.9"/><path d="M12.5 4.5 Q10 4 10.5 6.5 Q12.5 7.5 12 10 Q10.5 10.5 10 9.5 M11.3 3.5 V11" stroke="#e05a5a" stroke-width="0.8" fill="none"/><path d="M0.5 13.5 H15.5 M7 14 H9" stroke="#4a6aa0" stroke-width="1"/></svg>
<div class="t" style="left:210px;top:628px;font-size:11px;font-weight:normal">Ngân sách</div>
<svg class="a" style="left:185px;top:654px" width="17" height="17" viewBox="0 0 17 17"><path d="M0.5 0.5 H6 L8.5 3 V12 H0.5Z" fill="#fff" stroke="#4a6aa0" stroke-width="0.9"/><path d="M6.5 5.5 H12 L14.5 8 V17 H6.5Z" fill="#e8eef8" stroke="#4a6aa0" stroke-width="0.9"/><path d="M1.5 7.5 H6 M4.5 6 L6 7.5 L4.5 9 M8 12.5 H12.5 M11 11 L12.5 12.5 L11 14" stroke="#3a60b0" stroke-width="1.1" fill="none"/></svg>
<div class="t" style="left:210px;top:657px;font-size:11px;font-weight:normal">Báo cáo đối chiếu</div>
<div class="a" style="left:175px;top:416px;width:124px;height:28px;border:3px solid #f03a3a;z-index:5;box-shadow:2px 3px 4px rgba(0,0,0,0.3)"></div>
<div class="a" style="left:175px;top:746px;width:201px;height:1px;background:#c8c8c8"></div>
  <div class="a" style="left:201px;top:762px;width:150px;height:25px;background:#e1e1e1;border:1px solid #adadad"></div>
  <svg class="a" style="left:205px;top:766px" width="16" height="16" viewBox="0 0 16 16"><rect x="0.5" y="0.5" width="13" height="14" fill="#eef4fc" stroke="#7f9cc8"/><circle cx="4.5" cy="5" r="2.2" fill="#4a78c8"/><path d="M8 4 H12 M8 6.5 H12" stroke="#4a6aa8"/><ellipse cx="10" cy="12" rx="4.5" ry="2.6" fill="#fff" stroke="#555"/><circle cx="10" cy="12" r="1.2" fill="#555"/></svg>
  <div class="t" style="left:232px;top:769px;font-size:11px">Tùy chỉnh báo cáo</div>
</div>

<!-- ===== RIGHT CONTENT ===== -->
<div id="right">
  <div class="a" style="left:377px;top:117px;width:575px;height:680px;background:#f1f5fe"></div>
  <div class="a" style="left:375px;top:121px;width:576px;height:219px;border:3px solid #f03a3a;z-index:5;box-shadow:1px 4px 5px rgba(0,0,0,0.28)"></div>
  <div class="a" style="left:378px;top:124px;width:570px;height:6px;background:linear-gradient(rgba(0,0,0,0.22),rgba(0,0,0,0))"></div>
  <div class="t" style="left:389px;top:128px;font-size:24px;font-weight:bold">Tiền lương</div>
  <div class="a" style="left:385px;top:176px;width:561px;height:150px;background:#fff"></div>
<div class="t" style="left:395px;top:195px;font-size:11.2px">Bảng tổng hợp thanh toán tiền lương (Bảng lương cố định)</div>
<svg class="a" style="left:893px;top:192px" width="16" height="17" viewBox="0 0 16 17"><path d="M1.5 0.5 H8.5 L12 4 V8 M8 15.5 H1.5 V0.5 M8.5 0.5 V4 H12" fill="none" stroke="#4a5fa8" stroke-width="1"/><circle cx="9.5" cy="11.5" r="2.8" fill="#b5dcf5" stroke="#4a5fa8" stroke-width="1"/><path d="M11.5 13.5 L14.5 16.5" stroke="#4a5fa8" stroke-width="1.4"/></svg>
<svg class="a" style="left:919px;top:192px" width="17" height="17" viewBox="0 0 17 17"><path d="M8.5 1 L10.6 6 L16 6.3 L11.8 9.8 L13.2 15.3 L8.5 12.3 L3.8 15.3 L5.2 9.8 L1 6.3 L6.4 6Z" fill="none" stroke="#4a5fa8" stroke-width="1.1" stroke-linejoin="round"/></svg>
<div class="a" style="left:395px;top:222px;width:540px;height:1px;background:#dcdcdc"></div>
<div class="t" style="left:395px;top:245px;font-size:11.2px">Bảng tổng hợp thanh toán tiền lương (Bảng lương thời gian)</div>
<svg class="a" style="left:893px;top:242px" width="16" height="17" viewBox="0 0 16 17"><path d="M1.5 0.5 H8.5 L12 4 V8 M8 15.5 H1.5 V0.5 M8.5 0.5 V4 H12" fill="none" stroke="#4a5fa8" stroke-width="1"/><circle cx="9.5" cy="11.5" r="2.8" fill="#b5dcf5" stroke="#4a5fa8" stroke-width="1"/><path d="M11.5 13.5 L14.5 16.5" stroke="#4a5fa8" stroke-width="1.4"/></svg>
<svg class="a" style="left:919px;top:242px" width="17" height="17" viewBox="0 0 17 17"><path d="M8.5 1 L10.6 6 L16 6.3 L11.8 9.8 L13.2 15.3 L8.5 12.3 L3.8 15.3 L5.2 9.8 L1 6.3 L6.4 6Z" fill="none" stroke="#4a5fa8" stroke-width="1.1" stroke-linejoin="round"/></svg>
<div class="a" style="left:395px;top:272px;width:540px;height:1px;background:#dcdcdc"></div>
<div class="t" style="left:395px;top:295px;font-size:11.2px">Báo cáo tổng hợp lương nhân viên</div>
<svg class="a" style="left:893px;top:292px" width="16" height="17" viewBox="0 0 16 17"><path d="M1.5 0.5 H8.5 L12 4 V8 M8 15.5 H1.5 V0.5 M8.5 0.5 V4 H12" fill="none" stroke="#4a5fa8" stroke-width="1"/><circle cx="9.5" cy="11.5" r="2.8" fill="#b5dcf5" stroke="#4a5fa8" stroke-width="1"/><path d="M11.5 13.5 L14.5 16.5" stroke="#4a5fa8" stroke-width="1.4"/></svg>
<svg class="a" style="left:919px;top:292px" width="17" height="17" viewBox="0 0 17 17"><path d="M8.5 1 L10.6 6 L16 6.3 L11.8 9.8 L13.2 15.3 L8.5 12.3 L3.8 15.3 L5.2 9.8 L1 6.3 L6.4 6Z" fill="none" stroke="#4a5fa8" stroke-width="1.1" stroke-linejoin="round"/></svg>
<!-- floating -->
  <svg class="a" style="left:860px;top:589px" width="64" height="144" viewBox="0 0 64 144">
    <circle cx="31.5" cy="31.5" r="27.5" fill="#1a72e6"/>
    <path d="M18.5 16.5 H33 V25 H24 L21 28 V25 H18.5Z" fill="#fff" stroke="#fff" stroke-width="1" stroke-linejoin="round"/>
    <path d="M33.5 19.5 H43.5 V28 H41 V30.5 L38 28 H33.5Z" fill="#fff" stroke="#fff" stroke-width="1" stroke-linejoin="round"/>
    <path d="M32 21 V25.5 H36" fill="none" stroke="#1a72e6" stroke-width="1.2"/>
    <circle cx="22" cy="21" r="0.8" fill="#1a72e6"/><circle cx="25.5" cy="21" r="0.8" fill="#1a72e6"/><circle cx="29" cy="21" r="0.8" fill="#1a72e6"/>
    <circle cx="37" cy="24" r="0.8" fill="#1a72e6"/><circle cx="40" cy="24" r="0.8" fill="#1a72e6"/>
    <circle cx="23" cy="32.5" r="2.6" fill="#fff"/><circle cx="39" cy="32.5" r="2.6" fill="#fff"/>
    <path d="M17.5 43 V39.5 Q17.5 36.6 20.5 36.6 H25.5 Q28.5 36.6 28.5 39.5 V43Z" fill="#fff"/><path d="M33.5 43 V39.5 Q33.5 36.6 36.5 36.6 H41.5 Q44.5 36.6 44.5 39.5 V43Z" fill="#fff"/>
    <circle cx="31" cy="34.5" r="3.7" fill="#1a72e6"/><circle cx="31" cy="34.5" r="2.7" fill="#fff"/>
    <path d="M24 45 V41.8 Q24 38.5 27.3 38.5 H34.7 Q38 38.5 38 41.8 V45Z" fill="#fff" stroke="#1a72e6" stroke-width="1"/>
    <circle cx="49.4" cy="12.2" r="6.6" fill="#fff"/>
    <path d="M47.6 10.4 L51.2 14 M51.2 10.4 L47.6 14" stroke="#3a7ad8" stroke-width="1"/>
    <circle cx="31.5" cy="111.5" r="27.5" fill="#2a7fe6"/>
    <ellipse cx="29.3" cy="107.5" rx="10" ry="8" fill="#fff"/>
    <path d="M22 112 L20.5 119 L27 114.5Z" fill="#fff"/>
    <ellipse cx="36.1" cy="114.7" rx="9" ry="7.8" fill="#2a7fe6"/>
    <ellipse cx="36.1" cy="114.7" rx="7.5" ry="6.3" fill="#fff"/>
    <path d="M39 119 L43.5 122.5 L42.5 117Z" fill="#fff"/>
    <circle cx="49.4" cy="92.2" r="6.6" fill="#fff"/>
    <path d="M47.6 90.4 L51.2 94 M51.2 90.4 L47.6 94" stroke="#3a7ad8" stroke-width="1"/>
  </svg>
</div>

</body></html>
